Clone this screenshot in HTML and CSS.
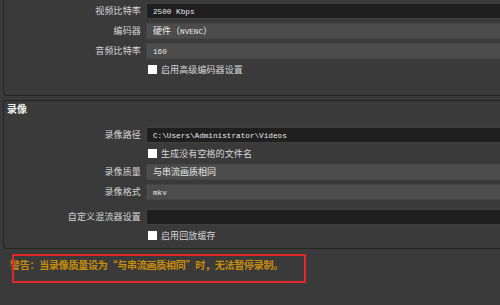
FILE: index.html
```html
<!DOCTYPE html>
<html lang="zh-CN">

<head>
    <meta charset="UTF-8">
    <meta name="viewport" content="width=device-width, initial-scale=1.0">
    <title>输出设置</title>
    <link rel="stylesheet" href="styles.css">
</head>

<body>
    <div class="page">
        <div class="group group-stream">
            <div class="form">
                <label class="label">视频比特率</label>
                <div class="field field-edit"><span class="latin">2500 Kbps</span></div>

                <label class="label">编码器</label>
                <div class="field field-combo">硬件（<span class="latin">NVENC</span>）</div>

                <label class="label">音频比特率</label>
                <div class="field field-combo"><span class="latin">160</span></div>

                <span></span>
                <div class="check"><span class="box"></span>启用高级编码器设置</div>
            </div>
        </div>

        <div class="group group-record">
            <div class="group-title">录像</div>
            <div class="form">
                <label class="label">录像路径</label>
                <div class="field field-edit"><span class="latin">C:\Users\Administrator\Videos</span></div>

                <span></span>
                <div class="check"><span class="box"></span>生成没有空格的文件名</div>

                <label class="label">录像质量</label>
                <div class="field field-combo">与串流画质相同</div>

                <label class="label">录像格式</label>
                <div class="field field-combo"><span class="latin">mkv</span></div>

                <label class="label spaced">自定义混流器设置</label>
                <div class="field field-edit spaced"></div>

                <span></span>
                <div class="check"><span class="box"></span>启用回放缓存</div>
            </div>
        </div>

        <div class="warning-wrap">
            <p class="warning">警告：当录像质量设为“与串流画质相同”时，无法暂停录制。</p>
            <div class="mark"></div>
        </div>
    </div>
</body>

</html>
```

FILE: styles.css
```css
* {
    box-sizing: border-box;
}

body {
    margin: 0;
    width: 500px;
    height: 305px;
    overflow: hidden;
    background-color: #3a3a3a;
    color: #d6d6d6;
    font-family: "Noto Sans CJK SC", sans-serif;
    font-size: 9px;
}

.page {
    width: 500px;
    padding-left: 3px;
}

/* group boxes run on past the right edge of the window */
.group {
    border: 1px solid #252525;
    border-right: none;
    border-radius: 4px 0 0 4px;
}

.group-stream {
    margin-top: -12px;
    padding: 14px 0 19px 0;
}

.group-record {
    margin-top: 4px;
    padding: 1px 0 6px 0;
}

.group-title {
    padding-left: 3px;
    height: 13px;
    line-height: 13px;
    font-size: 10px;
    font-weight: bold;
    color: #f0f0f0;
    margin-bottom: 12px;
}

.form {
    display: grid;
    grid-template-columns: 137px 1fr;
    column-gap: 5px;
    row-gap: 4px;
    align-items: center;
}

.label {
    text-align: right;
    letter-spacing: 0.15px;
    line-height: 16px;
}

.field {
    height: 16px;
    line-height: 14px;
    padding-left: 6px;
    border: 1px solid #434343;
    border-right: none;
    font-size: 9px;
    color: #e8e8e8;
    white-space: nowrap;
}

.latin {
    font-family: "Liberation Mono", monospace;
    font-size: 7.7px;
}

.field-edit {
    background-color: #1f1f1f;
    border-color: #404040;
}

.field-combo {
    background-color: #4c4c4c;
    border-color: #464646;
}

.spaced {
    margin-top: 5px;
}

.check {
    display: flex;
    align-items: center;
    height: 13px;
    padding-left: 2px;
    letter-spacing: 0.1px;
}

.box {
    width: 9px;
    height: 9px;
    background-color: #ffffff;
    margin-right: 4px;
}

.warning-wrap {
    position: relative;
    height: 40px;
}

.warning {
    margin: 0;
    padding: 10px 0 0 7px;
    font-size: 10px;
    line-height: 12px;
    font-weight: bold;
    letter-spacing: -0.25px;
    color: #c88d0a;
}

/* red annotation frame drawn over the warning */
.mark {
    position: absolute;
    left: 9px;
    top: 5px;
    width: 294px;
    height: 29px;
    border: 2px solid #e3262a;
}
```
